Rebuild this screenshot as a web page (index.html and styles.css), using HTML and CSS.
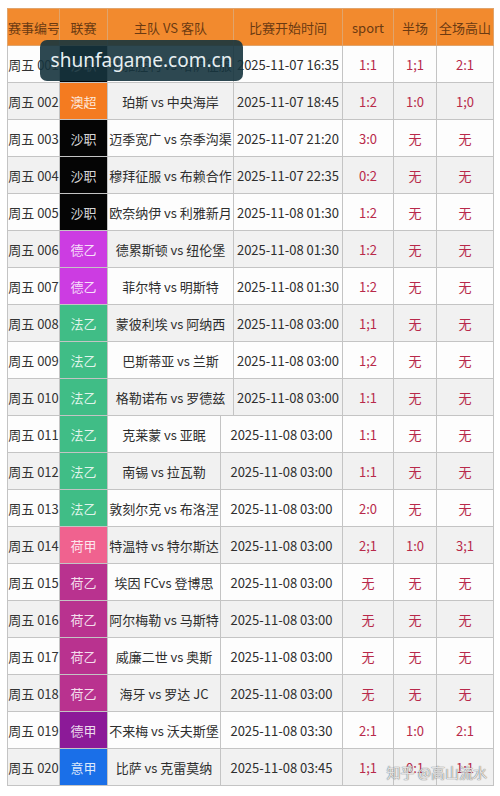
FILE: index.html
```html
<!DOCTYPE html>
<html>
<head>
  <meta charset="utf-8">
  <title>赛事列表</title>
  <link rel="stylesheet" href="styles.css">
</head>
<body>
  <div class="sheet">
    <table class="fixtures">
      <colgroup>
        <col class="c-num"><col class="c-lg"><col class="c-teams-a"><col class="c-time-a"><col class="c-sport"><col class="c-half"><col class="c-full">
      </colgroup>
      <thead>
        <tr>
          <th>赛事编号</th><th>联赛</th><th>主队 VS 客队</th><th>比赛开始时间</th><th>sport</th><th>半场</th><th>全场高山</th>
        </tr>
      </thead>
      <tbody>
        <tr><td class="num">周五 001</td><td class="lg lg-sha">沙职</td><td class="teams">利雅胜利 vs 哈萨征服</td><td class="time">2025-11-07 16:35</td><td class="score">1:1</td><td class="score">1;1</td><td class="score">2:1</td></tr>
        <tr><td class="num">周五 002</td><td class="lg lg-aus">澳超</td><td class="teams">珀斯 vs 中央海岸</td><td class="time">2025-11-07 18:45</td><td class="score">1:2</td><td class="score">1:0</td><td class="score">1;0</td></tr>
        <tr><td class="num">周五 003</td><td class="lg lg-sha">沙职</td><td class="teams">迈季宽广 vs 奈季沟渠</td><td class="time">2025-11-07 21:20</td><td class="score">3:0</td><td class="score">无</td><td class="score">无</td></tr>
        <tr><td class="num">周五 004</td><td class="lg lg-sha">沙职</td><td class="teams">穆拜征服 vs 布赖合作</td><td class="time">2025-11-07 22:35</td><td class="score">0:2</td><td class="score">无</td><td class="score">无</td></tr>
        <tr><td class="num">周五 005</td><td class="lg lg-sha">沙职</td><td class="teams">欧奈纳伊 vs 利雅新月</td><td class="time">2025-11-08 01:30</td><td class="score">1:2</td><td class="score">无</td><td class="score">无</td></tr>
        <tr><td class="num">周五 006</td><td class="lg lg-de2">德乙</td><td class="teams">德累斯顿 vs 纽伦堡</td><td class="time">2025-11-08 01:30</td><td class="score">1:2</td><td class="score">无</td><td class="score">无</td></tr>
        <tr><td class="num">周五 007</td><td class="lg lg-de2">德乙</td><td class="teams">菲尔特 vs 明斯特</td><td class="time">2025-11-08 01:30</td><td class="score">1:2</td><td class="score">无</td><td class="score">无</td></tr>
        <tr><td class="num">周五 008</td><td class="lg lg-fr2">法乙</td><td class="teams">蒙彼利埃 vs 阿纳西</td><td class="time">2025-11-08 03:00</td><td class="score">1;1</td><td class="score">无</td><td class="score">无</td></tr>
        <tr><td class="num">周五 009</td><td class="lg lg-fr2">法乙</td><td class="teams">巴斯蒂亚 vs 兰斯</td><td class="time">2025-11-08 03:00</td><td class="score">1;2</td><td class="score">无</td><td class="score">无</td></tr>
        <tr><td class="num">周五 010</td><td class="lg lg-fr2">法乙</td><td class="teams">格勒诺布 vs 罗德兹</td><td class="time">2025-11-08 03:00</td><td class="score">1:1</td><td class="score">无</td><td class="score">无</td></tr>
      </tbody>
    </table>

    <table class="fixtures fixtures-lower">
      <colgroup>
        <col class="c-num"><col class="c-lg"><col class="c-teams-b"><col class="c-time-b"><col class="c-sport"><col class="c-half"><col class="c-full">
      </colgroup>
      <tbody>
        <tr><td class="num">周五 011</td><td class="lg lg-fr2">法乙</td><td class="teams">克莱蒙 vs 亚眠</td><td class="time">2025-11-08 03:00</td><td class="score">1:1</td><td class="score">无</td><td class="score">无</td></tr>
        <tr><td class="num">周五 012</td><td class="lg lg-fr2">法乙</td><td class="teams">南锡 vs 拉瓦勒</td><td class="time">2025-11-08 03:00</td><td class="score">1:1</td><td class="score">无</td><td class="score">无</td></tr>
        <tr><td class="num">周五 013</td><td class="lg lg-fr2">法乙</td><td class="teams">敦刻尔克 vs 布洛涅</td><td class="time">2025-11-08 03:00</td><td class="score">2:0</td><td class="score">无</td><td class="score">无</td></tr>
        <tr><td class="num">周五 014</td><td class="lg lg-nl1">荷甲</td><td class="teams">特温特 vs 特尔斯达</td><td class="time">2025-11-08 03:00</td><td class="score">2;1</td><td class="score">1:0</td><td class="score">3;1</td></tr>
        <tr><td class="num">周五 015</td><td class="lg lg-nl2">荷乙</td><td class="teams">埃因 FCvs 登博思</td><td class="time">2025-11-08 03:00</td><td class="score">无</td><td class="score">无</td><td class="score">无</td></tr>
        <tr><td class="num">周五 016</td><td class="lg lg-nl2">荷乙</td><td class="teams">阿尔梅勒 vs 马斯特</td><td class="time">2025-11-08 03:00</td><td class="score">无</td><td class="score">无</td><td class="score">无</td></tr>
        <tr><td class="num">周五 017</td><td class="lg lg-nl2">荷乙</td><td class="teams">威廉二世 vs 奥斯</td><td class="time">2025-11-08 03:00</td><td class="score">无</td><td class="score">无</td><td class="score">无</td></tr>
        <tr><td class="num">周五 018</td><td class="lg lg-nl2">荷乙</td><td class="teams">海牙 vs 罗达 JC</td><td class="time">2025-11-08 03:00</td><td class="score">无</td><td class="score">无</td><td class="score">无</td></tr>
        <tr><td class="num">周五 019</td><td class="lg lg-de1">德甲</td><td class="teams">不来梅 vs 沃夫斯堡</td><td class="time">2025-11-08 03:30</td><td class="score">2:1</td><td class="score">1:0</td><td class="score">2:1</td></tr>
        <tr><td class="num">周五 020</td><td class="lg lg-it1">意甲</td><td class="teams">比萨 vs 克雷莫纳</td><td class="time">2025-11-08 03:45</td><td class="score">1;1</td><td class="score">0:1</td><td class="score">1:1</td></tr>
      </tbody>
    </table>

    <div class="stamp">shunfagame.com.cn</div>
    <div class="watermark">知乎 @高山流水</div>
  </div>
</body>
</html>
```

FILE: styles.css
```css
body {
  background-color: white;
  margin: 0;
  font-family: "Noto Sans CJK SC", "Noto Sans", sans-serif;
  font-size: 13px;
  color: #333333;
}

.sheet {
  position: relative;
  width: 486px;
  margin: 8px 0 0 7px;
}

.fixtures {
  width: 486px;
  border-collapse: collapse;
  table-layout: fixed;
}

.fixtures th,
.fixtures td {
  height: 36px;
  padding: 0;
  border: 1px solid #c4c4c4;
  text-align: center;
  white-space: nowrap;
  overflow: hidden;
}

.fixtures th {
  background-color: #f28a2e;
  color: #6b3a12;
  font-weight: normal;
  border-color: #e0a46c;
}

.fixtures-lower tr:first-child td {
  border-top: none;
}

.c-num { width: 52px; }
.c-lg { width: 48px; }
.c-teams-a { width: 126px; }
.c-time-a { width: 109px; }
.c-teams-b { width: 113px; }
.c-time-b { width: 122px; }
.c-sport { width: 51px; }
.c-half { width: 43px; }
.c-full { width: 57px; }

/* zebra rows */
.fixtures tbody tr {
  background-color: #fdfdfd;
}

.fixtures tbody tr:nth-child(even) {
  background-color: #f1f1f1;
}

.teams,
.time {
  color: #2e2e2e;
}

.score {
  color: #b8294a;
}

/* league colour blocks */
.lg {
  color: rgba(255, 255, 255, 0.85);
}

.lg-aus { background-color: #f47b20; }
.lg-sha { background-color: #050505; }
.lg-de2 { background-color: #cc3ce2; }
.lg-fr2 { background-color: #40bd86; }
.lg-nl1 { background-color: #f0628f; }
.lg-nl2 { background-color: #b9328f; }
.lg-de1 { background-color: #8c1a98; }
.lg-it1 { background-color: #1a6fe8; }

.stamp {
  position: absolute;
  left: 33px;
  top: 32px;
  width: 203px;
  height: 41px;
  border-radius: 7px;
  background-color: rgba(22, 52, 62, 0.9);
  color: #e6eef1;
  font-family: "Noto Sans", sans-serif;
  font-size: 19px;
  line-height: 41px;
  text-align: center;
}

.watermark {
  position: absolute;
  right: 6px;
  bottom: 4px;
  color: rgba(255, 255, 255, 0.8);
  font-size: 14px;
  text-shadow: 0 0 1px #777777, 0 0 1px #777777;
}
```
